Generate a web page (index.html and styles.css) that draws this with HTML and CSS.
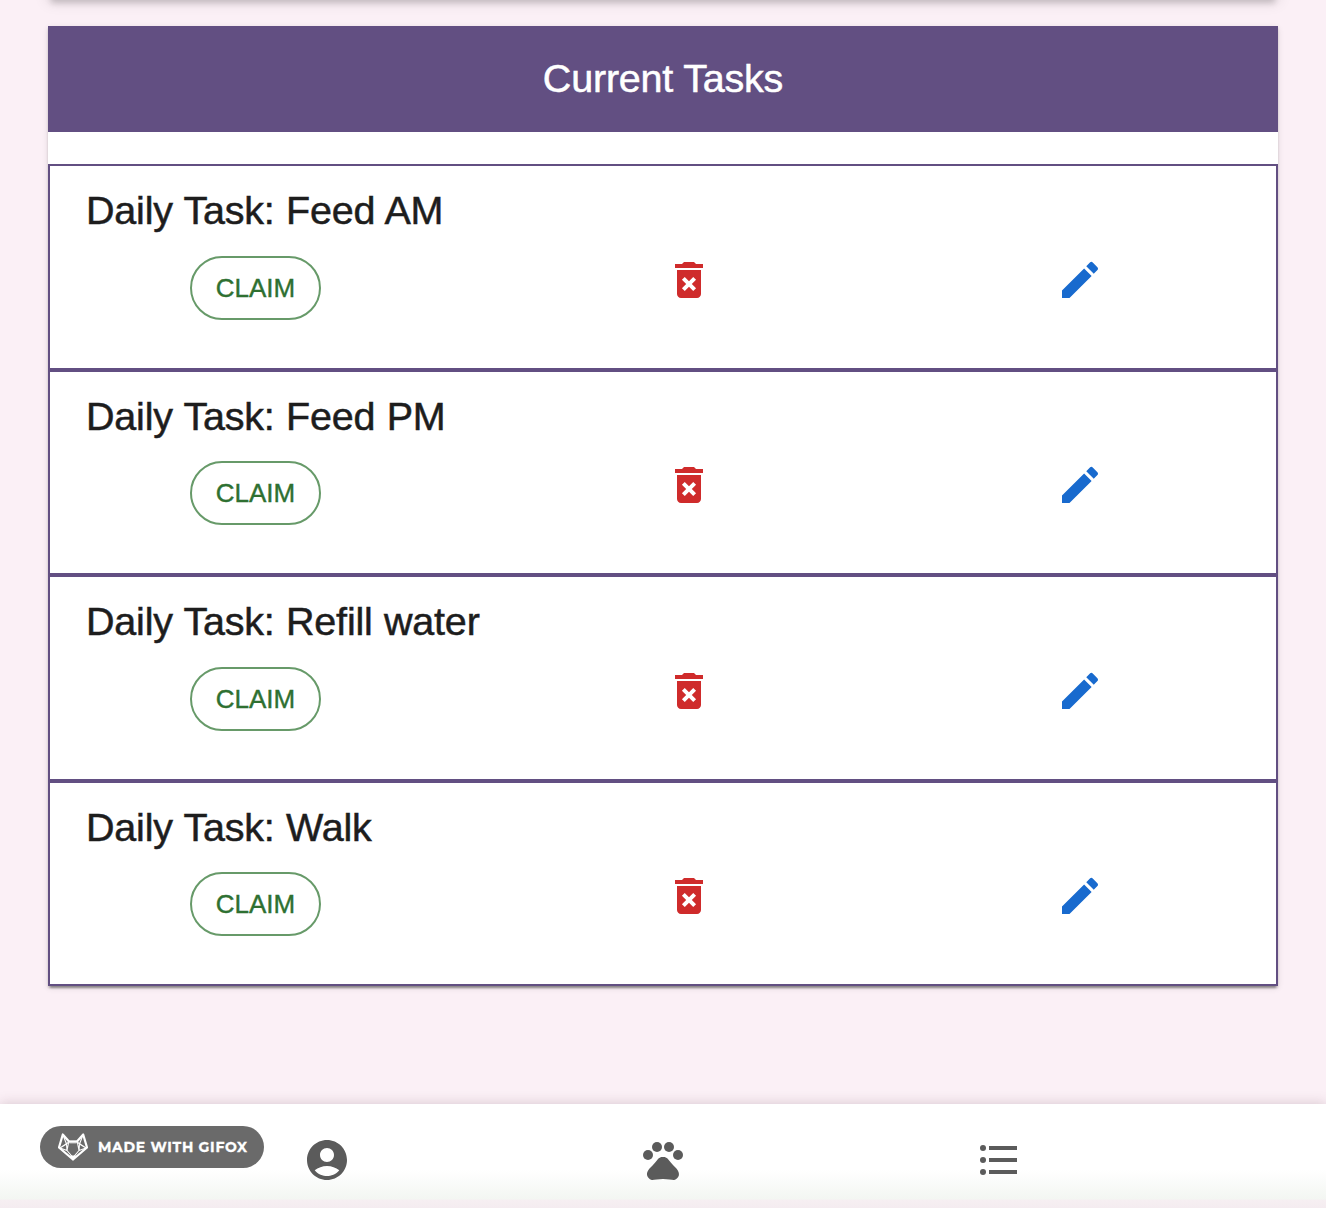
FILE: index.html
```
<!DOCTYPE html>
<html lang="en">
<head>
<meta charset="utf-8">
<title>Current Tasks</title>
<link rel="stylesheet" href="styles.css">
</head>
<body>
<svg class="defs" aria-hidden="true">
  <symbol id="trash" viewBox="0 0 24 24"><path d="M6 19c0 1.1.9 2 2 2h8c1.1 0 2-.9 2-2V7H6v12zm2.46-7.12l1.41-1.41L12 12.59l2.12-2.12 1.41 1.41L13.41 14l2.12 2.12-1.41 1.41L12 15.41l-2.12 2.12-1.41-1.41L10.59 14l-2.13-2.12zM15.5 4l-1-1h-5l-1 1H5v2h14V4z"/></symbol>
  <symbol id="pencil" viewBox="0 0 24 24"><path d="M3 17.25V21h3.75L17.81 9.94l-3.75-3.75L3 17.25zM20.71 7.04c.39-.39.39-1.02 0-1.41l-2.34-2.34a.9959.9959 0 0 0-1.41 0l-1.83 1.83 3.75 3.75 1.83-1.83z"/></symbol>
</svg>
<main class="page">
  <div class="previous-card"></div>
  <section class="card">
    <h1 class="card-title">Current Tasks</h1>
    <ul class="tasks">
      <li class="task">
        <h2 class="task-name">Daily Task: Feed AM</h2>
        <div class="actions"><button class="claim">CLAIM</button><svg class="icon delete"><use href="#trash"/></svg><svg class="icon edit"><use href="#pencil"/></svg></div>
      </li>
      <li class="task">
        <h2 class="task-name">Daily Task: Feed PM</h2>
        <div class="actions"><button class="claim">CLAIM</button><svg class="icon delete"><use href="#trash"/></svg><svg class="icon edit"><use href="#pencil"/></svg></div>
      </li>
      <li class="task">
        <h2 class="task-name">Daily Task: Refill water</h2>
        <div class="actions"><button class="claim">CLAIM</button><svg class="icon delete"><use href="#trash"/></svg><svg class="icon edit"><use href="#pencil"/></svg></div>
      </li>
      <li class="task">
        <h2 class="task-name">Daily Task: Walk</h2>
        <div class="actions"><button class="claim">CLAIM</button><svg class="icon delete"><use href="#trash"/></svg><svg class="icon edit"><use href="#pencil"/></svg></div>
      </li>
    </ul>
  </section>
</main>
<nav class="bottom-nav">
  <a class="nav-item"><svg class="icon" viewBox="0 0 24 24"><path d="M12 2C6.48 2 2 6.48 2 12s4.48 10 10 10 10-4.480 10-10S17.520 2 12 2zm0 4c1.930 0 3.500 1.570 3.500 3.500S13.930 13 12 13s-3.500-1.570-3.500-3.500S10.070 6 12 6zm0 14c-2.030 0-4.430-.820-6.140-2.880C7.550 15.800 9.680 15 12 15s4.450.800 6.140 2.120C16.430 19.180 14.030 20 12 20z"/></svg></a>
  <a class="nav-item"><svg class="icon" viewBox="0 0 24 24"><circle cx="4.500" cy="9.500" r="2.500"/><circle cx="9" cy="5.500" r="2.500"/><circle cx="15" cy="5.500" r="2.500"/><circle cx="19.500" cy="9.500" r="2.500"/><path d="M17.340 14.860c-.870-1.020-1.600-1.890-2.480-2.910-.460-.540-1.050-1.080-1.750-1.320-.110-.040-.220-.070-.330-.090-.250-.040-.520-.040-.780-.040s-.530 0-.790.050c-.110.020-.220.050-.330.090-.700.240-1.280.780-1.750 1.320-.870 1.020-1.600 1.890-2.480 2.910-1.310 1.310-2.920 2.760-2.620 4.790.290 1.020 1.020 2.030 2.330 2.320.730.150 3.060-.440 5.540-.440h.180c2.480 0 4.810.580 5.540.440 1.310-.290 2.040-1.310 2.330-2.320.310-2.040-1.300-3.490-2.610-4.800z"/></svg></a>
  <a class="nav-item"><svg class="icon" viewBox="0 0 24 24"><circle cx="4" cy="6" r="1.500"/><circle cx="4" cy="12" r="1.500"/><circle cx="4" cy="18" r="1.500"/><path d="M7 5h14v2H7zM7 11h14v2H7zM7 17h14v2H7z"/></svg></a>
  <div class="badge">
    <svg class="fox" viewBox="0 0 30 28">
      <path class="fox-brow" d="M10 7.500h10l-1.500 3h-7z"/>
      <path class="fox-lines" d="M5 2l3.500 9L2 15l9-6M25 2l-3.500 9L28 15l-9-6M10.500 10L9 17.500l6 7 6-7L19.500 10M2 15l7 2.500M28 15l-7 2.500M9 17.500l-.5-6.500M21 17.500l.5-6.500"/>
      <path class="fox-head" d="M4.800 1.500L11 8.500h8l6.200-7L29 14.500 15 26.500 1 14.500z"/>
      <path class="fox-nose" d="M11.500 22.500h7L15 27.500z"/>
    </svg>
    <span>MADE WITH GIFOX</span>
  </div>
</nav>
</body>
</html>
```
FILE: styles.css
```
* { box-sizing: border-box; }
body {
  margin: 0;
  height: 1208px;
  overflow: hidden;
  display: flex;
  flex-direction: column;
  background: #fbf0f6;
  font-family: "Liberation Sans", Arial, sans-serif;
}
.defs { display: none; }
.page { flex: 1; padding: 0 48px; }
.previous-card {
  height: 30px;
  margin: -30px 0 26px;
  box-shadow: 0 6px 6px -3px rgba(0,0,0,.16), 0 2px 14px 1px rgba(0,0,0,.1);
}
.card {
  height: 960px;
  background: #fff;
  box-shadow: 0 4px 2px -2px rgba(0,0,0,.3), 0 2px 2px rgba(0,0,0,.14), 0 2px 6px rgba(0,0,0,.12);
}
.card-title {
  height: 106px;
  margin: 0 0 32px;
  background: #624f82;
  color: #fff;
  font-size: 39.5px;
  font-weight: 400;
  letter-spacing: -.2px;
  line-height: 105px;
  text-align: center;
  -webkit-text-stroke: .5px;
}
.tasks { margin: 0; padding: 0; list-style: none; }
.task {
  height: 205.5px;
  padding: 20px 36px 0;
  border: 2px solid #624f82;
}
.task-name {
  margin: 0;
  height: 69.9px;
  color: #1d1d1d;
  font-size: 39.5px;
  font-weight: 400;
  letter-spacing: -.2px;
  word-spacing: .6px;
  line-height: 49px;
  -webkit-text-stroke: .5px;
}
.actions {
  display: grid;
  grid-template-columns: 475px 391px 48px;
  padding-left: 104px;
}
.claim {
  width: 131px;
  height: 64px;
  padding: 1px 0 0;
  border: 2px solid #679a69;
  border-radius: 32px;
  background: none;
  color: #2e7031;
  font: 26px "Liberation Sans", Arial, sans-serif;
  -webkit-text-stroke: .4px;
}
.icon { display: block; width: 48px; height: 48px; fill: currentColor; }
.delete { color: #cf2b2b; }
.edit { color: #186ace; }
.bottom-nav {
  position: relative;
  display: flex;
  justify-content: center;
  height: 104px;
  padding-top: 32px;
  color: #5b5b5b;
  background: linear-gradient(#fff 0 66px, #f3f6f2 95px, #f6eff2 96px, #f4ecf0 104px);
  box-shadow: 0 0 12px rgba(80,40,60,.22);
}
.nav-item { display: flex; justify-content: center; width: 336px; }
.badge {
  position: absolute;
  left: 40px;
  top: 22px;
  display: flex;
  align-items: center;
  gap: 10px;
  width: 224px;
  height: 42px;
  padding-left: 18px;
  border-radius: 21px;
  background: #6a6a6a;
  color: #fff;
  font: 700 14px/40px Montserrat, "Open Sans", sans-serif;
  letter-spacing: .7px;
  white-space: nowrap;
  -webkit-text-stroke: .3px;
}
.fox {
  width: 30px;
  height: 28px;
  fill: none;
  stroke: #fff;
  stroke-linejoin: round;
}
.fox-head { stroke-width: 2.2; }
.fox-lines { stroke-width: 1.1; }
.fox-brow { fill: #c4c4c4; stroke: none; }
.fox-nose { fill: #fff; stroke: none; }
```
